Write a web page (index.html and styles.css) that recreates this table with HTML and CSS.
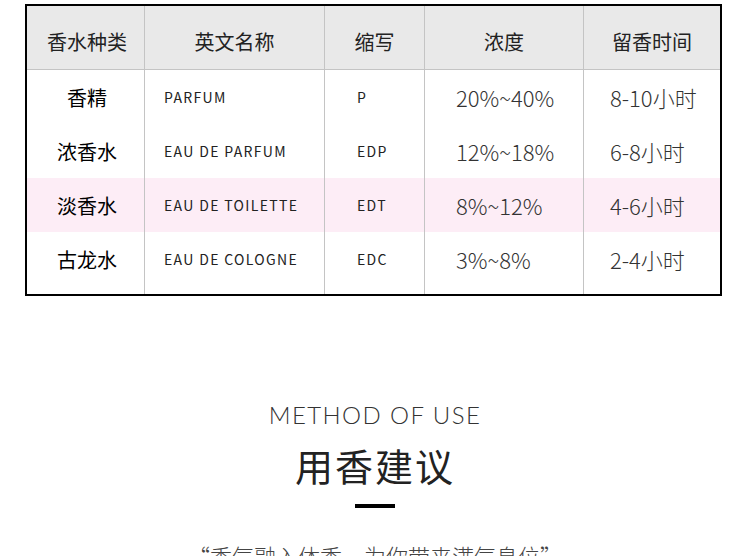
FILE: index.html
```html
<!DOCTYPE html>
<html lang="zh-CN">
<head>
<meta charset="utf-8">
<title>香水种类</title>
<link rel="stylesheet" href="styles.css">
</head>
<body>
<div class="table">
  <div class="row head">
    <div class="c c1">香水种类</div>
    <div class="c c2">英文名称</div>
    <div class="c c3">缩写</div>
    <div class="c c4">浓度</div>
    <div class="c c5">留香时间</div>
  </div>
  <div class="row">
    <div class="c c1">香精</div>
    <div class="c c2">PARFUM</div>
    <div class="c c3">P</div>
    <div class="c c4">20%~40%</div>
    <div class="c c5">8-10小时</div>
  </div>
  <div class="row">
    <div class="c c1">浓香水</div>
    <div class="c c2">EAU DE PARFUM</div>
    <div class="c c3">EDP</div>
    <div class="c c4">12%~18%</div>
    <div class="c c5">6-8小时</div>
  </div>
  <div class="row pink">
    <div class="c c1">淡香水</div>
    <div class="c c2">EAU DE TOILETTE</div>
    <div class="c c3">EDT</div>
    <div class="c c4">8%~12%</div>
    <div class="c c5">4-6小时</div>
  </div>
  <div class="row last">
    <div class="c c1">古龙水</div>
    <div class="c c2">EAU DE COLOGNE</div>
    <div class="c c3">EDC</div>
    <div class="c c4">3%~8%</div>
    <div class="c c5">2-4小时</div>
  </div>
</div>

<section class="method">
  <div class="en">METHOD OF USE</div>
  <h2 class="zh">用香建议</h2>
  <div class="bar"></div>
  <p class="quote">“香气融入体香，为你带来满气息位”</p>
</section>
</body>
</html>
```

FILE: styles.css
```css
* { box-sizing: border-box; }
body {
  margin: 0;
  background: #fff;
  font-family: "Noto Sans CJK SC", "Noto Sans", sans-serif;
  color: #222;
  overflow: hidden;
}
.table {
  margin: 4px 0 0 25px;
  width: 697px;
  border: 2px solid #000;
}
.row {
  display: grid;
  grid-template-columns: 117px 180px 100px 159px 137px;
  height: 54px;
}
.row.head {
  height: 64px;
  background: #e9e9e9;
  border-bottom: 1px solid #c4c4c4;
}
.row.pink { background: #fdedf6; }
.row.last { height: 62px; }
.row.last .c { padding-bottom: 8px; }
.c {
  display: flex;
  align-items: center;
  border-left: 1px solid #c4c4c4;
  white-space: nowrap;
}
.c1 { border-left: none; justify-content: center; padding-left: 3px; font-size: 20px; font-weight: 400; color: #000; }
.c2 { padding-left: 19px; font-size: 14px; letter-spacing: 1.35px; }
.c3 { padding-left: 32px; font-size: 14px; letter-spacing: 1.35px; }
.c4 { padding-left: 31px; font-size: 22px; font-weight: 300; color: #333; }
.c5 { padding-left: 26px; font-size: 22px; font-weight: 300; color: #333; }
.head .c {
  justify-content: center;
  padding-left: 0;
  padding-top: 8px;
  font-size: 20px;
  font-weight: 400;
  letter-spacing: 0;
  color: #222;
}
.head .c1 { padding-left: 3px; }
.method {
  display: flex;
  flex-direction: column;
  align-items: center;
  padding-top: 104px;
}
.en {
  font-family: "Lato", sans-serif;
  font-weight: 300;
  font-size: 24px;
  letter-spacing: 1.4px;
  color: #333;
  line-height: 30px;
}
.zh {
  margin: 10px 0 0;
  font-size: 38px;
  font-weight: 400;
  line-height: 50px;
  letter-spacing: 2px;
  color: #222;
}
.bar {
  margin-top: 14px;
  width: 40px;
  height: 4px;
  background: #000;
}
.quote {
  margin: 32px 0 0;
  font-size: 22px;
  font-weight: 300;
  color: #444;
  line-height: 30px;
}
```
